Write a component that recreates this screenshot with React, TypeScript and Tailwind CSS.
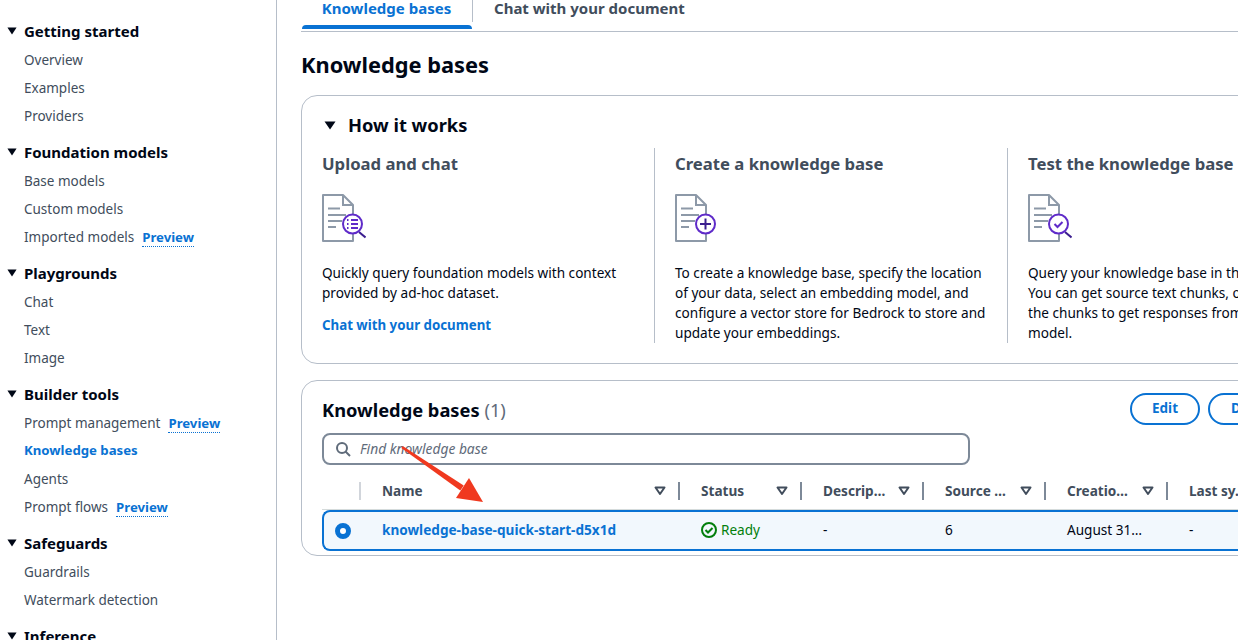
import type { ReactNode } from "react";

type NavItem = { label: string; preview?: boolean; active?: boolean };

const nav: { title: string; items: NavItem[] }[] = [
  { title: "Getting started", items: [{ label: "Overview" }, { label: "Examples" }, { label: "Providers" }] },
  {
    title: "Foundation models",
    items: [{ label: "Base models" }, { label: "Custom models" }, { label: "Imported models", preview: true }],
  },
  { title: "Playgrounds", items: [{ label: "Chat" }, { label: "Text" }, { label: "Image" }] },
  {
    title: "Builder tools",
    items: [
      { label: "Prompt management", preview: true },
      { label: "Knowledge bases", active: true },
      { label: "Agents" },
      { label: "Prompt flows", preview: true },
    ],
  },
  { title: "Safeguards", items: [{ label: "Guardrails" }, { label: "Watermark detection" }] },
  { title: "Inference", items: [] },
];

const columns = ["Name", "Status", "Descrip…", "Source …", "Creatio…", "Last sy."];

function Caret({ className = "" }: { className?: string }) {
  return (
    <svg className={className} viewBox="0 0 12 9" preserveAspectRatio="none">
      <path d="M0.500 0.500h11L6 8.500z" fill="#000716" />
    </svg>
  );
}

// outlined sort/filter triangle in the table header
function SortCaret() {
  return (
    <svg width="12" height="10" viewBox="0 0 12 10" className="shrink-0">
      <path d="M1.500 1.500h9L6 8z" fill="none" stroke="#414d5c" strokeWidth="2" strokeLinejoin="round" />
    </svg>
  );
}

function DocIcon({ children, handle }: { children: ReactNode; handle?: boolean }) {
  return (
    <svg width="44" height="48" viewBox="0 0 44 48" fill="none" className="block">
      <path d="M1 1h20l10 10v36H1z" stroke="#8d99a8" strokeWidth="2" strokeLinejoin="round" />
      <path d="M21 1v10h10" stroke="#8d99a8" strokeWidth="2" />
      <path d="M6 14.500h12M6 21h18M6 27h14M6 33h8" stroke="#8d99a8" strokeWidth="2" />
      {handle && <path d="M37 38l6.500 5.500" stroke="#3b1e8f" strokeWidth="2" />}
      <circle cx="30.500" cy="30" r="9.500" fill="#fff" stroke="#5f2bc9" strokeWidth="2" />
      {children}
    </svg>
  );
}

function Step({
  title,
  icon,
  lines,
  link,
  last,
}: {
  title: string;
  icon: ReactNode;
  lines: string[];
  link?: string;
  last?: boolean;
}) {
  return (
    <div className={`shrink-0 ${last ? "w-[353px]" : "w-[333px] mr-[20px] border-r border-[#b6bec9]"}`}>
      <h3 className="text-[16.700px] leading-[32px] font-bold text-[#414d5c] whitespace-nowrap">{title}</h3>
      <div className="mt-[14px] h-[48px]">{icon}</div>
      <div className="mt-[21px] text-[13.600px] leading-[20px] text-[#000716] whitespace-nowrap">
        {lines.map((l) => (
          <div key={l}>{l}</div>
        ))}
      </div>
      {link && <div className="mt-[12px] text-[13.300px] leading-[20px] font-bold text-[#0972d3]">{link}</div>}
    </div>
  );
}

export default function App() {
  return (
    <div
      className="flex h-[640px] w-[1238px] overflow-hidden bg-white"
      style={{ fontFamily: '"Noto Sans", sans-serif' }}
    >
      {/* Side navigation */}
      <aside className="w-[277px] shrink-0 border-r border-[#b6bec9] pt-[16px] pl-[5px] overflow-hidden">
        {nav.map((section) => (
          <div key={section.title} className="mb-[7px]">
            <div className="flex h-[30px] items-center">
              <Caret className="ml-[2px] h-[8px] w-[10px]" />
              <span className="ml-[7px] text-[15px] font-bold text-[#000716]">{section.title}</span>
            </div>
            {section.items.map((item) => (
              <div key={item.label} className="flex h-[28px] items-center pl-[19px] text-[13.500px]">
                <span className={item.active ? "text-[13.200px] font-bold text-[#0972d3]" : "text-[#414d5c]"}>
                  {item.label}
                </span>
                {item.preview && (
                  <span className="ml-[8px] text-[13.200px] font-bold text-[#0972d3] leading-[18px] border-b border-dotted border-[#0972d3]">
                    Preview
                  </span>
                )}
              </div>
            ))}
          </div>
        ))}
      </aside>

      {/* Main content */}
      <main className="relative min-w-0 flex-1 pl-[24px] overflow-hidden">
        <div className="flex h-[32px] items-start border-b border-[#b6bec9]">
          <div className="relative -mt-[3px] flex h-[33px] w-[171px] items-start justify-center">
            <span className="text-[15px] leading-[22px] font-bold text-[#0972d3]">Knowledge bases</span>
            <span className="absolute left-[1px] right-0 bottom-[1px] h-[4px] rounded-t bg-[#0972d3]" />
          </div>
          <div className="h-[22px] w-px bg-[#b6bec9]" />
          <span className="-mt-[3px] ml-[21px] text-[15px] leading-[22px] font-bold text-[#414d5c]">
            Chat with your document
          </span>
        </div>

        <h1 className="mt-[15px] text-[21.800px] leading-[36px] font-bold text-[#000716]">Knowledge bases</h1>

        {/* How it works */}
        <section className="mt-[12px] h-[269px] w-[1100px] rounded-2xl border border-[#b6bec9] pl-[20px] pt-[15px]">
          <div className="flex h-[28px] items-center">
            <Caret className="ml-[2px] h-[9px] w-[12px]" />
            <span className="ml-[12px] text-[18.300px] font-bold text-[#000716]">How it works</span>
          </div>
          <div className="mt-[9px] flex h-[195px]">
            <Step
              title="Upload and chat"
              lines={["Quickly query foundation models with context", "provided by ad-hoc dataset."]}
              link="Chat with your document"
              icon={
                <DocIcon handle>
                  <path
                    d="M25 26h1.500M25 30h1.500M25 34h1.500M29 26h7M29 30h7M29 34h7"
                    stroke="#5f2bc9"
                    strokeWidth="1.800"
                  />
                </DocIcon>
              }
            />
            <Step
              title="Create a knowledge base"
              lines={[
                "To create a knowledge base, specify the location",
                "of your data, select an embedding model, and",
                "configure a vector store for Bedrock to store and",
                "update your embeddings.",
              ]}
              icon={
                <DocIcon>
                  <path d="M30.500 24.500v11M25 30h11" stroke="#3b1e8f" strokeWidth="2" />
                </DocIcon>
              }
            />
            <Step
              last
              title="Test the knowledge base"
              lines={[
                "Query your knowledge base in the",
                "You can get source text chunks, o",
                "the chunks to get responses from",
                "model.",
              ]}
              icon={
                <DocIcon handle>
                  <path d="M26.500 30l3 3 5-5" stroke="#5f2bc9" strokeWidth="2" />
                </DocIcon>
              }
            />
          </div>
        </section>

        {/* Knowledge bases table */}
        <section className="mt-[16px] h-[176px] w-[1100px] rounded-2xl border border-[#b6bec9] pl-[20px] pt-[12px]">
          <div className="flex h-[31px] items-center">
            <h2 className="mt-[2px] w-[808px] text-[18.300px] font-bold text-[#000716]">
              Knowledge bases <span className="font-normal text-[#5f6b7a]">(1)</span>
            </h2>
            <button className="h-[32px] w-[70px] rounded-full border-2 border-[#0972d3] text-[13.500px] font-bold text-[#0972d3]">
              Edit
            </button>
            <button className="ml-[8px] h-[32px] w-[90px] rounded-full border-2 border-[#0972d3] pl-[21px] text-left text-[13.500px] font-bold text-[#0972d3]">
              Delete
            </button>
          </div>
          <div className="mt-[9px] flex h-[32px] w-[648px] items-center rounded-lg border-2 border-[#7d8998] pl-[11px]">
            <svg width="16" height="16" viewBox="0 0 16 16" fill="none" stroke="#5f6b7a" strokeWidth="2">
              <circle cx="7" cy="7" r="5" />
              <path d="M10.500 10.500L15 15" />
            </svg>
            <span className="ml-[9px] text-[13.800px] italic text-[#5f6b7a]">Find knowledge base</span>
          </div>
          <div className="mt-[17px] grid h-[28px] w-[1000px] grid-cols-[39px_319px_122px_122px_122px_122px_154px] items-start border-b border-[#d5dbdb]">
            <div className="h-[18px] border-r-2 border-[#d1d5db]" />
            {columns.map((col, i) => (
              <div
                key={col}
                className={`flex h-[18px] items-center justify-between pl-[21px] pr-[12px] ${
                  i < 5 ? "border-r-2 border-[#7d8998]" : ""
                }`}
              >
                <span className="text-[13.600px] font-bold text-[#414d5c] whitespace-nowrap">{col}</span>
                {i < 5 && <SortCaret />}
              </div>
            ))}
          </div>
          <div className="grid h-[41px] w-[1000px] grid-cols-[39px_319px_122px_122px_122px_122px_154px] items-center rounded-l-lg border-y-2 border-l-2 border-[#0972d3] bg-[#f2f8fd] text-[13.600px] text-[#000716]">
            <div className="pl-[11px]">
              <span className="block h-[16px] w-[16px] rounded-full border-[5px] border-[#0972d3] bg-white" />
            </div>
            <a className="pl-[19px] text-[13.600px] font-bold text-[#0972d3] whitespace-nowrap">
              knowledge-base-quick-start-d5x1d
            </a>
            <div className="flex items-center pl-[19px] text-[#037f0c]">
              <svg width="16" height="16" viewBox="0 0 16 16" fill="none" stroke="#037f0c" strokeWidth="2">
                <circle cx="8" cy="8" r="7" />
                <path d="M4.500 8l2.500 2.500 4.500-4.500" />
              </svg>
              <span className="ml-[4px]">Ready</span>
            </div>
            <div className="pl-[19px]">-</div>
            <div className="pl-[19px]">6</div>
            <div className="pl-[19px] whitespace-nowrap">August 31…</div>
            <div className="pl-[19px]">-</div>
          </div>
        </section>

        {/* red annotation arrow */}
        <svg className="absolute left-[120px] top-[440px]" width="90" height="70" viewBox="0 0 90 70">
          <path d="M4.300 8L5.700 6L66.700 45.500L63.300 50.500z" fill="#f0391f" />
          <path d="M72 38L86 62 59 58z" fill="#f0391f" />
        </svg>
      </main>
    </div>
  );
}
